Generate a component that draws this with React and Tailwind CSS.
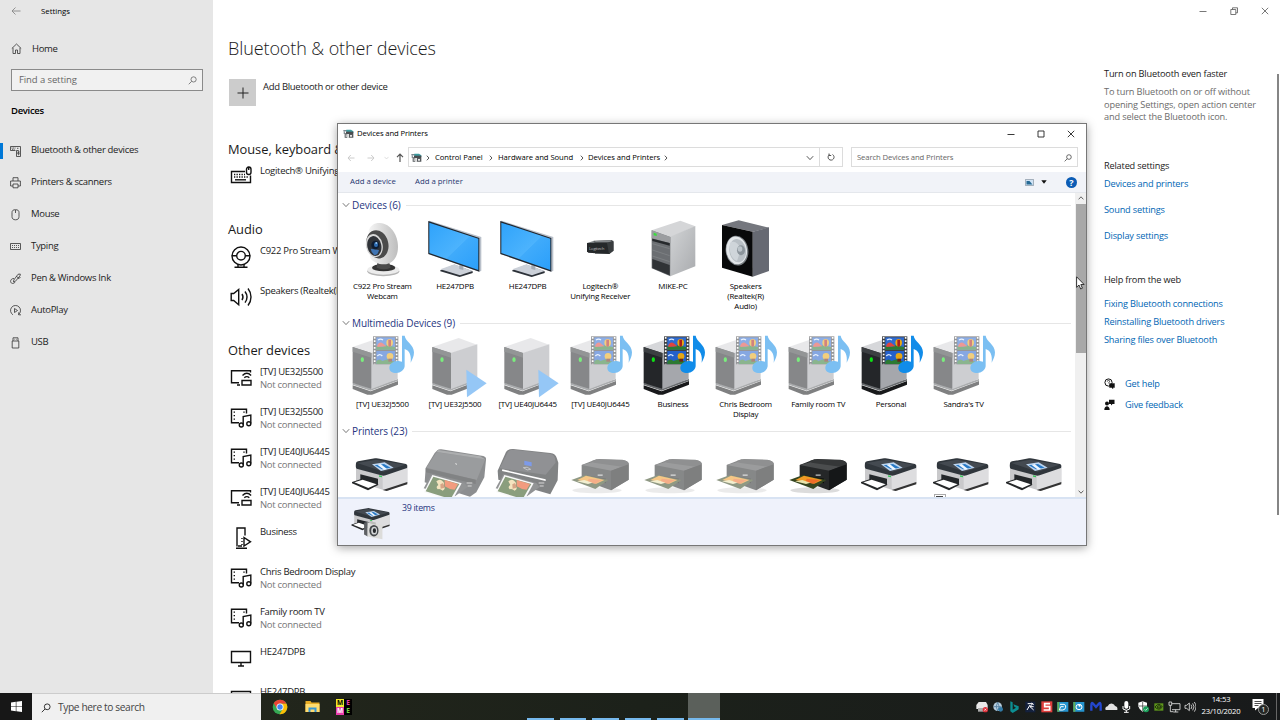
import React from "react";

const navItems = [
  { label: "Bluetooth & other devices", icon: "devices", active: true },
  { label: "Printers & scanners", icon: "printer" },
  { label: "Mouse", icon: "mouse" },
  { label: "Typing", icon: "keyboard" },
  { label: "Pen & Windows Ink", icon: "pen" },
  { label: "AutoPlay", icon: "autoplay" },
  { label: "USB", icon: "usb" },
];

const otherDevices = [
  { name: "[TV] UE32J5500", status: "Not connected", icon: "cast" },
  { name: "[TV] UE32J5500", status: "Not connected", icon: "media" },
  { name: "[TV] UE40JU6445", status: "Not connected", icon: "media" },
  { name: "[TV] UE40JU6445", status: "Not connected", icon: "cast" },
  { name: "Business", icon: "server" },
  { name: "Chris Bedroom Display", status: "Not connected", icon: "media" },
  { name: "Family room TV", status: "Not connected", icon: "media" },
  { name: "HE247DPB", icon: "display" },
  { name: "HE247DPB", icon: "display" },
];

/* ---------- small line icons ---------- */

function NavIcon({ name }) {
  const paths = {
    devices: (
      <>
        <path d="M5.500 5.500h-5v-4h10v10h-4v-6h2" />
        <path d="M1.500 3h4M7 3.300h2M2 4.300h3" strokeDasharray="1 0.600" />
        <path d="M7.300 6.800l2.200 2.200-1.100 1V5.800l1.100 1L7.300 9" strokeWidth="0.700" />
      </>
    ),
    printer: <path d="M3 4V.7h5V4M3 9H.6V4h9.800v5H8M3 7h5v3.800H3z" />,
    mouse: <path d="M5.500.7c2.500 0 3.500 1 3.500 2.800v4c0 2-1 3.300-3.500 3.300S2 9.500 2 7.500v-4C2 1.700 3 .7 5.500.7zM5.500 1v3" />,
    keyboard: (
      <>
        <path d="M.5 2.500h10v6h-10z" />
        <path d="M2 4.500h7M2 6.500h7" strokeDasharray="1 1" />
      </>
    ),
    pen: (
      <path d="M10.300 1 8 1.300 3.800 7l-.3 2 1.900-.7L10 2.800zM6.500 3.500l1.800 1.300M4 5.500c-2-.2-3.500 1.300-3.400 3 .2 2.500 3.700 2.500 4.400.5M8 5.500l2.500-1" />
    ),
    autoplay: (
      <>
        <path d="M3 9.800A5 5 0 1 1 8.500 9.500M8.700 7.300v2.500H11" />
        <path d="M4.500 3.500v4l3-2z" />
      </>
    ),
    usb: <path d="M3 4V.8h5V4M2.200 4h6.600v7H2.200zM4.500 2.300h.6M6 2.300h.6" />,
    home: <path d="M.8 5.500 5.500 1l4.700 4.500M2 4.800v5.700h2.500V7h2v3.500H9V4.800" />,
  };
  return (
    <svg width="11" height="12" viewBox="0 0 11 12" fill="none" stroke="#333" strokeWidth="0.8" className="shrink-0">
      {paths[name]}
    </svg>
  );
}

function DeviceIcon({ name }) {
  const paths = {
    keyboard: (
      <>
        <path d="M15 5.500H1.500v11h19v-7" />
        <path d="M4 8.500h11M4 11h14" strokeDasharray="1.300 1.200" />
        <path d="M5 13.800h11" />
        <rect x="16.500" y="1" width="4.500" height="7.500" rx="2.200" />
        <path d="M18.700 1v3" />
      </>
    ),
    webcam: (
      <>
        <circle cx="11" cy="10" r="9" />
        <circle cx="11" cy="9.700" r="4.300" />
        <path d="M2 9.700h4.700M15.300 9.700H20M8 18.500v2.500M14 18.500v2.500M4.500 21.300h13" />
      </>
    ),
    speaker: (
      <path d="M1.200 7.500v7h2.500l5 4.200V3.500l-5 4zM12 8c1.300 2 1.300 4.200 0 6.200M15 5.500c2.500 3.400 2.500 7.700 0 11.200M18 2.500c4 5 4 12 0 17" />
    ),
    cast: (
      <>
        <path d="M20.500 5.500V3.700h-19v12H9M7 18h3" />
        <path d="M12.500 8.500c2.600-2.600 6-2.600 8.600 0M14.300 10.800c1.600-1.600 3.500-1.600 5 0" />
        <path d="M12 13.500h9v4.500h-9z" />
      </>
    ),
    media: (
      <>
        <path d="M16.500 6.500V2.200h-15v13.500H9" />
        <path d="M4.300 4.500v9.500M14 4.500v2.500" strokeDasharray="1.300 2.200" />
        <path d="M13.200 17.800V9.500l7.600-1.500v8.500" />
        <circle cx="11.300" cy="18" r="2" />
        <circle cx="18.800" cy="16.700" r="2" />
      </>
    ),
    server: (
      <>
        <path d="M15 8.500V1H7v18.500M6 21.300h11M8 19h4M12 11v1M12 14v1M12 17v1" />
        <path d="M14 10.500v8.500l6.500-4.200z" />
      </>
    ),
    display: <path d="M1.500 4.500h19v11h-19zM11 15.500v3M8 19h6" />,
  };
  return (
    <svg width="22" height="22" viewBox="0 0 22 22" fill="none" stroke="#111" strokeWidth="1.400" className="shrink-0">
      {paths[name]}
    </svg>
  );
}

function SearchGlyph({ className, color }) {
  return (
    <svg viewBox="0 0 10 10" className={className} fill="none" stroke={color} strokeWidth="0.9">
      <circle cx="6.200" cy="3.800" r="2.900" />
      <path d="M4 6 .8 9.200" />
    </svg>
  );
}

/* ---------- illustrated device icons, three units per pixel ---------- */

function Art({ box, faded, children }) {
  return (
    <svg
      viewBox={box}
      width="72.660"
      height="62"
      className={faded ? "block shrink-0 overflow-visible opacity-55" : "block shrink-0 overflow-visible"}
    >
      {children}
    </svg>
  );
}

function Webcam() {
  return (
    <Art box="18 24 218 186">
      <defs>
        <linearGradient id="camShell" x1="0" x2="1">
          <stop offset="0" stopColor="#f5f5f5" />
          <stop offset="1" stopColor="#bdbdbd" />
        </linearGradient>
      </defs>
      <ellipse cx="130" cy="184" rx="48" ry="15" fill="#b5b5b5" />
      <ellipse cx="130" cy="179" rx="48" ry="15" fill="#ececec" />
      <ellipse cx="131" cy="173" rx="35" ry="11" fill="#333" />
      <path d="M114 145h30l8 28q-20 10-42 0z" fill="#4a4a4a" />
      <path d="M86 62c5-16 18-24 34-23 32 2 54 36 54 72 0 30-16 52-42 52-18 0-34-8-42-20z" fill="url(#camShell)" />
      <ellipse cx="112" cy="103" rx="33" ry="43" fill="#4b4b4b" transform="rotate(-14 112 103)" />
      <ellipse cx="103" cy="107" rx="25" ry="35" fill="#d9d9d9" transform="rotate(-12 103 107)" />
      <ellipse cx="103" cy="108" rx="21" ry="30" fill="#303338" transform="rotate(-12 103 108)" />
      <path d="M92 116l25 4q-4 18-15 14-8-6-10-18z" fill="#3f74b3" />
      <ellipse cx="106" cy="105" rx="12" ry="13" fill="#0e1d33" />
      <ellipse cx="108" cy="104" rx="6" ry="7" fill="#2e6db4" />
      <circle cx="109" cy="99" r="3" fill="#9cc8f2" />
    </Art>
  );
}

function Monitor() {
  return (
    <Art box="236 24 218 186">
      <defs>
        <linearGradient id="screen" x1="0" y1="0" x2="1" y2="1">
          <stop offset="0" stopColor="#2fa3fb" />
          <stop offset="0.550" stopColor="#4cb3fd" />
          <stop offset="0.560" stopColor="#40abfb" />
          <stop offset="1" stopColor="#2b9ffa" />
        </linearGradient>
      </defs>
      <path d="M300 181l42-17 55 20v5l-39 12-58-17z" fill="#2d3239" />
      <path d="M300 178l42-15 55 20-38 13z" fill="#ccd1d9" />
      <path d="M357 155h12v25l-12-3z" fill="#a4abb5" />
      <path d="M264 34l4-2 155 49v101l-6 3-153-53z" fill="#b9c0ca" />
      <path d="M264 33l153 51v101l-153-53z" fill="#20262e" />
      <path d="M267 38l147 48v94l-147-51z" fill="url(#screen)" />
    </Art>
  );
}

function Receiver() {
  return (
    <Art box="11 24 218 186">
      <path d="M100 92l55-2 5 5v27l-12 9h-44z" fill="#55585b" />
      <path d="M106 93l45-2 4 5h-52z" fill="#83878a" />
      <path d="M80 99l22-7v38l-21-4z" fill="#7b7f82" />
      <path d="M80 99l60-1 8 8v26l-64-4-4-4z" fill="#25282a" />
      <path d="M140 98l19-6v30l-13 10z" fill="#383c3e" />
      <text x="86" y="121" fontSize="13" fontFamily="Open Sans" fill="#bbb" textLength="46">Logitech</text>
    </Art>
  );
}

function Tower() {
  return (
    <Art box="229 24 218 186">
      <defs>
        <linearGradient id="towerSide" x1="0" x2="1" y1="0" y2="1">
          <stop offset="0" stopColor="#d2d4d6" />
          <stop offset="1" stopColor="#a9abae" />
        </linearGradient>
      </defs>
      <path d="M273 61l86-29 45 17-74 33z" fill="#d5d6d8" />
      <path d="M328 80l76-32v121l-75 30z" fill="url(#towerSide)" />
      <path d="M273 61l56 20v118l-56-24z" fill="#6b6e72" />
      <path d="M273 61l56 20v19l-56-15z" fill="#9b9da0" />
      <path d="M275 86l52 13v8l-52-14z" fill="#26292c" />
      <path d="M275 101l52 15M275 120l52 17M275 138l52 17" stroke="#8e9194" strokeWidth="1.500" />
      <path d="M275 147l52 18v31l-52-22z" fill="#303336" />
      <path d="M279 68l9 3v7l-9-2z" fill="#38e03b" />
    </Art>
  );
}

function Speaker() {
  return (
    <Art box="447 24 218 186">
      <path d="M486 45l50-14 91 22-48 12z" fill="#75777e" />
      <path d="M578 65l49-13v131l-49 17z" fill="#666972" />
      <path d="M486 45l92 20v135l-92-27z" fill="#08090a" />
      <ellipse cx="531" cy="122" rx="34" ry="45" fill="#777d82" transform="rotate(-8 531 122)" />
      <ellipse cx="530" cy="121" rx="31" ry="42" fill="#e2e6e9" transform="rotate(-8 530 121)" />
      <ellipse cx="533" cy="122" rx="25" ry="35" fill="#b9c0c6" transform="rotate(-8 533 122)" />
      <path d="M510 98q20-10 33 20l-12 35q-26-10-21-55z" fill="#cfd5da" />
      <ellipse cx="543" cy="121" rx="12" ry="15" fill="#8b949b" />
      <ellipse cx="540" cy="117" rx="7" ry="8" fill="#bdc5cb" />
    </Art>
  );
}

function ServerBody({ dx = 0 }) {
  return (
    <g transform={`translate(${dx} 0)`}>
      <path d="M38 181l54 18 82-31v11l-78 30H82l-44-17z" fill="#18191b" />
      <path d="M38 179l54 18 82-30v-5l-82 25-54-14z" fill="#66696c" />
      <path d="M38 66l79-27 55 20-78 26z" fill="#d6d7da" />
      <path d="M93 84l80-26v104l-80 31z" fill="#a5a7ac" />
      <path d="M38 66l56 18v107l-56-17z" fill="#242629" />
      <path d="M38 66l56 18v14l-56-18z" fill="#3c3f42" />
      <ellipse cx="67" cy="104" rx="5" ry="7" fill="#0ee014" />
    </g>
  );
}

function MediaServer({ faded }) {
  return (
    <Art box="18 33 218 186" faded={faded}>
      <ServerBody />
      <path d="M99 34h76v84h-76z" fill="#3f4144" />
      <path d="M104 36v82M170 36v82" stroke="#fff" strokeWidth="5" strokeDasharray="5 5" />
      <path d="M109 37h56v37h-56z" fill="#2f6bd0" />
      <path d="M109 78h56v39h-56z" fill="#2460cb" />
      <path d="M109 62l18 3 14-4 24 5v8h-56zM109 108q10-9 18 0l16-5 22 8v6h-56z" fill="#2c7a32" />
      <path d="M112 60q8-12 18-4l9 8-27 2z" fill="#e0443e" />
      <ellipse cx="149" cy="53" rx="10" ry="11" fill="#e8a713" />
      <path d="M145 44v18l4 4 4-4V44z" fill="#a91f1c" />
      <ellipse cx="150" cy="94" rx="10" ry="10" fill="#e8a713" />
      <path d="M145 101h11v9h-11z" fill="#6b2515" />
      <path d="M112 93q7-8 15 0M114 45q8-5 15 0" stroke="#dcecff" strokeWidth="4" fill="none" />
      <path d="M186 32h8c2 17 28 27 28 50 0 12-5 22-10 31 3-24-5-37-18-41v52c-2 12-12 20-25 20-13 0-21-6-21-15 0-13 14-23 28-21l10 2z" fill="#118ce9" />
    </Art>
  );
}

function PlayServer() {
  return (
    <Art box="236 33 218 186" faded>
      <ServerBody dx={238} />
      <path d="M378 134l61 41-59 42z" fill="#3f9af0" />
    </Art>
  );
}

function WhitePrinterShapes() {
  return (
    <>
      <path d="M48 84l82 22 72-25v48l-62 24-92-29z" fill="#c9c9cb" />
      <path d="M128 106l74-25v48l-62 23-12-6z" fill="#dddddf" />
      <path d="M131 149l71-23v7l-62 20-12-3z" fill="#333" />
      <path d="M48 70q0-4 6-6l51-9q7-1 14 1l79 16q5 2 4 8l-1 4-64 22q-6 2-14 0l-73-20q-4-2-2-16z" fill="#30363c" />
      <path d="M52 69l56-10 88 15-65 21z" fill="#444a51" />
      <path d="M96 73l38-6 27 16-38 10z" fill="#bdd5f0" />
      <path d="M104 76l28-4 20 11-26 5z" fill="#2779c6" />
      <path d="M112 74l10-2 19 15-9 2z" fill="#eef6ff" />
      <path d="M61 103l53 13v19l-53-10z" fill="#24272a" />
      <path d="M36 126l28-9 52 17-32 17-48-21z" fill="#252729" />
      <path d="M43 127l25-8 42 14-25 11z" fill="#fff" />
      <path d="M117 106l9 2v4l-9-2z" fill="#37c75a" />
    </>
  );
}

function WhitePrinter() {
  return (
    <Art box="18 12 218 186">
      <WhitePrinterShapes />
    </Art>
  );
}

function Photo() {
  return (
    <>
      <path d="M276 105l88 25-29 53-84-26z" fill="#f6f6f6" />
      <path d="M279 110l78 22-26 45-75-23z" fill="#2b4f14" />
      <path d="M313 120l40 12-10 17q-18-1-30-10z" fill="#e84c17" />
      <path d="M288 124q10-9 18-1 9 6 2 14 11 8-1 15-8-7-15-4-7-8 2-13z" fill="#eccf8c" />
      <path d="M300 133l8-4 5 14-12 3z" fill="#b65b24" />
    </>
  );
}

function AllInOne({ big }) {
  return (
    <Art box="236 12 218 186" faded>
      {big ? (
        <>
          <path d="M256 92l25-56q6-10 22-9l111 12q16 2 19 14l5 15-2 53-22 42-130-38-26-6z" fill="#1c1e21" />
          <path d="M262 85l25-50q6-7 17-6l107 12q14 1 17 14l2 13-30 36z" fill="#36393d" />
          <path d="M270 88l130 30v5l-131-30z" fill="#fff" />
          <path d="M336 62l22 5v12l-22-4z" fill="#1449d8" />
          <path d="M333 83q12-5 22 5-10 6-22-5" fill="none" stroke="#bbb" strokeWidth="2" />
        </>
      ) : (
        <>
          <path d="M256 84l27-45 9-9q3-3 11-2l126 20q10 3 8 12l-5 52-24 45-19 13-136-43z" fill="#303336" />
          <path d="M258 83l31-46 146 20-26 63z" fill="#494c4f" />
          <path d="M289 36l5-6 126 19 14 9z" fill="#696c6f" />
          <path d="M256 85l150 34v13l-149-35z" fill="#1c1e20" />
          <path d="M345 71l5 2" stroke="#ddd" strokeWidth="3" />
        </>
      )}
      <path d="M274 101l98 28 10 12-38 28-94-24z" fill="#3a3d40" />
      <Photo />
      <path d="M379 129h17M382 138h12" stroke="#bbb" strokeWidth="3" />
    </Art>
  );
}

function CompactPrinter({ faded }) {
  return (
    <Art box="671 12 218 186" faded={faded}>
      <ellipse cx="770" cy="151" rx="74" ry="9" fill="#dcdcdc" />
      <path d="M724 75l44-17 81 3q16 2 16 11v47l-53 32-88-32z" fill="#252728" />
      <path d="M724 75l45-12 95 10-51 19z" fill="#4b4d4e" />
      <path d="M756 62l20-5 70 2q14 2 20 12l-9 11-92-13q-10-1-9-7z" fill="#353738" />
      <path d="M812 92l53-19v46l-53 32z" fill="#151718" />
      <path d="M731 105l66 11v14l-69-16z" fill="#080909" />
      <path d="M693 120l41-15 70 15-39 27z" fill="#354620" />
      <path d="M711 120l26-13 55 13-24 11z" fill="#f09a24" />
      <path d="M745 116l40 4-20 11-23-5z" fill="#ee6d28" />
      <path d="M710 124l22-4 24 8-13 4z" fill="#e9e3ab" />
      <path d="M772 103h15v5h-15z" fill="#9b9d9e" />
    </Art>
  );
}

const devices = [
  { art: <Webcam />, label: ["C922 Pro Stream", "Webcam"] },
  { art: <Monitor />, label: ["HE247DPB"] },
  { art: <Monitor />, label: ["HE247DPB"] },
  { art: <Receiver />, label: ["Logitech®", "Unifying Receiver"] },
  { art: <Tower />, label: ["MIKE-PC"] },
  { art: <Speaker />, label: ["Speakers", "(Realtek(R)", "Audio)"] },
];

const mediaDevices = [
  { art: <MediaServer faded />, label: ["[TV] UE32J5500"] },
  { art: <PlayServer />, label: ["[TV] UE32J5500"] },
  { art: <PlayServer />, label: ["[TV] UE40JU6445"] },
  { art: <MediaServer faded />, label: ["[TV] UE40JU6445"] },
  { art: <MediaServer />, label: ["Business"] },
  { art: <MediaServer faded />, label: ["Chris Bedroom", "Display"] },
  { art: <MediaServer faded />, label: ["Family room TV"] },
  { art: <MediaServer />, label: ["Personal"] },
  { art: <MediaServer faded />, label: ["Sandra's TV"] },
];

const printers = [
  { art: <WhitePrinter />, label: [] },
  { art: <AllInOne />, label: [] },
  { art: <AllInOne big />, label: [] },
  { art: <CompactPrinter faded />, label: [] },
  { art: <CompactPrinter faded />, label: [] },
  { art: <CompactPrinter faded />, label: [] },
  { art: <CompactPrinter />, label: [] },
  { art: <WhitePrinter />, label: [] },
  { art: <WhitePrinter />, label: [], marker: true },
  { art: <WhitePrinter />, label: [] },
];

/* ---------- settings ---------- */

function Sidebar() {
  return (
    <aside className="w-[213px] h-full bg-[#e6e6e6] shrink-0 text-[9.500px] tracking-[-0.310px] text-[#222]">
      <div className="flex items-center h-[22px] pl-[11px] gap-[20px]">
        <svg width="10" height="10" viewBox="0 0 10 10" fill="none" stroke="#888" strokeWidth="0.9">
          <path d="M9.500 5H1M4.500 1.500 1 5l3.500 3.500" />
        </svg>
        <span className="pt-px text-[7.800px] tracking-normal text-black">Settings</span>
      </div>
      <div className="flex items-center h-[20px] mt-[17px] pl-[11px] gap-[10px]">
        <NavIcon name="home" />
        <span>Home</span>
      </div>
      <div className="mt-[10px] ml-[11px] w-[192px] h-[22px] border-[1.500px] border-[#8a8a8a] bg-[#f1f1f1] flex items-center justify-between pl-[7px] pr-[5px] text-[#666]">
        <span className="tracking-[-0.100px]">Find a setting</span>
        <SearchGlyph className="w-[9px] h-[9px]" color="#666" />
      </div>
      <div className="mt-[10px] h-[20px] flex items-center pl-[11px] font-semibold text-black">Devices</div>
      <nav className="mt-[13px] pt-[0.500px]">
        {navItems.map((item) => (
          <div key={item.label} className="h-[32px] flex items-center">
            <div className={item.active ? "w-[3px] h-[16px] bg-[#0078d7]" : "w-[3px]"} />
            <div className="ml-[7px] mr-[10px]">
              <NavIcon name={item.icon} />
            </div>
            <span>{item.label}</span>
          </div>
        ))}
      </nav>
    </aside>
  );
}

function DeviceRow({ name, status, icon }) {
  return (
    <div className="h-[40px] flex">
      <div className="w-[32px] pl-[2px] pt-[2px]">
        <DeviceIcon name={icon} />
      </div>
      <div className="text-[9.500px] leading-[13px] tracking-[-0.280px] whitespace-nowrap">
        <div>{name}</div>
        {status && <div className="text-[#767676]">{status}</div>}
      </div>
    </div>
  );
}

function SectionTitle({ children }) {
  return <h2 className="h-[22px] flex items-center text-[12.900px] tracking-[-0.050px] whitespace-nowrap">{children}</h2>;
}

function SettingsMain() {
  return (
    <main className="w-[875px] h-full pl-[15px] overflow-hidden text-[#1a1a1a]">
      <h1 className="mt-[33px] h-[30px] flex items-center text-[18px] font-light tracking-[-0.100px]">Bluetooth &amp; other devices</h1>
      <div className="mt-[16px] ml-px h-[27px] flex gap-[7px]">
        <div className="w-[27px] h-[27px] bg-[#ccc] flex items-center justify-center">
          <svg width="12" height="12" viewBox="0 0 12 12" stroke="#222" strokeWidth="1">
            <path d="M6 .5v11M.5 6h11" />
          </svg>
        </div>
        <span className="text-[9.500px] leading-[15px] tracking-[-0.300px]">Add Bluetooth or other device</span>
      </div>
      <div className="mt-[33px]">
        <SectionTitle>Mouse, keyboard &amp; pen</SectionTitle>
        <div className="mt-[3px]">
          <DeviceRow name="Logitech® Unifying Receiver" icon="keyboard" />
        </div>
      </div>
      <div className="mt-[15px]">
        <SectionTitle>Audio</SectionTitle>
        <div className="mt-[3px]">
          <DeviceRow name="C922 Pro Stream Webcam" icon="webcam" />
          <DeviceRow name="Speakers (Realtek(R) Audio)" icon="speaker" />
        </div>
      </div>
      <div className="mt-[16px]">
        <SectionTitle>Other devices</SectionTitle>
        <div className="mt-[3px]">
          {otherDevices.map((d, i) => (
            <DeviceRow key={i} {...d} />
          ))}
        </div>
      </div>
    </main>
  );
}

function Link({ children, className }) {
  return <a className={`block h-[18px] leading-[18px] text-[#0066b4] ${className || ""}`}>{children}</a>;
}

function SettingsAside() {
  return (
    <aside className="w-[192px] h-full shrink-0 text-[9.200px] tracking-[-0.180px] text-[#1a1a1a] whitespace-nowrap">
      <div className="h-[22px] flex items-center justify-end gap-[23px] pr-[11px]">
        <svg width="8" height="8" viewBox="0 0 8 8" stroke="#555" fill="none" strokeWidth="0.800">
          <path d="M.5 4.500h7" />
        </svg>
        <svg width="8" height="8" viewBox="0 0 8 8" stroke="#555" fill="none" strokeWidth="0.800">
          <path d="M.8 2.500h5v5h-5zM2.500 2.500V.8h5v5H5.800" />
        </svg>
        <svg width="8" height="8" viewBox="0 0 8 8" stroke="#555" fill="none" strokeWidth="0.800">
          <path d="M.8.8l6.400 6.400M7.200.8.8 7.200" />
        </svg>
      </div>
      <div className="flex justify-between pt-[43px]">
        <div className="pl-[16px]">
          <div className="h-[18px] leading-[18px]">Turn on Bluetooth even faster</div>
          <p className="mt-[3px] leading-[12.500px] tracking-[-0.130px] text-[#6b6b6b]">
            To turn Bluetooth on or off without
            <br />
            opening Settings, open action center
            <br />
            and select the Bluetooth icon.
          </p>
          <div className="mt-[33px] h-[18px] leading-[18px]">Related settings</div>
          <Link>Devices and printers</Link>
          <Link className="mt-[8px]">Sound settings</Link>
          <Link className="mt-[8px]">Display settings</Link>
          <div className="mt-[26px] h-[18px] leading-[18px]">Help from the web</div>
          <Link className="mt-[6px]">Fixing Bluetooth connections</Link>
          <Link>Reinstalling Bluetooth drivers</Link>
          <Link>Sharing files over Bluetooth</Link>
          <div className="mt-[26px] flex items-center gap-[10px]">
            <svg width="11" height="11" viewBox="0 0 11 11" fill="none" stroke="#111">
              <circle cx="4.500" cy="4.500" r="3.600" />
              <path d="M3.300 3.500c0-1.700 2.500-1.500 2.300 0-.1.900-1.100.9-1.100 1.800" strokeWidth="0.800" />
              <path d="M5.500 5.500h5v4H9v1.300L7.500 9.500h-2z" fill="#111" strokeWidth="0.400" />
            </svg>
            <Link>Get help</Link>
          </div>
          <div className="mt-[3px] flex items-center gap-[10px]">
            <svg width="11" height="11" viewBox="0 0 11 11" fill="#111">
              <circle cx="3" cy="4.500" r="2" />
              <path d="M.3 11c0-5 5.400-5 5.400 0zM5 .8h5.500v4.200H8.500L7 6.500V5H5z" />
            </svg>
            <Link>Give feedback</Link>
          </div>
        </div>
        <div className="mt-[9px] mr-px w-[2px] h-[441px] bg-[#858585]" />
      </div>
    </aside>
  );
}

/* ---------- explorer window ---------- */

function PrintersGlyph() {
  return (
    <svg width="11" height="10" viewBox="0 0 33 30" className="shrink-0">
      <path d="M1 3h20v4H1z" fill="#7d8890" />
      <path d="M2 7h4v8H2z" fill="#8d979d" />
      <path d="M10 2h14l7 5v5H10z" fill="#3c9ca0" />
      <path d="M9 8h22v7H9z" fill="#494d50" />
      <path d="M5 13h8v13H5zM17 15h14v11H17z" fill="#55595c" />
      <path d="M8 16h3v8H8zM14 15h3v10h-3z" fill="#eee" />
      <path d="M21 18h6v5h-6z" fill="#e6e6e6" />
    </svg>
  );
}

function Chevron({ className }) {
  return (
    <svg width="4" height="6" viewBox="0 0 4 6" fill="none" stroke="#444" strokeWidth="0.9" className={className}>
      <path d="M.8.7 3 3 .8 5.300" />
    </svg>
  );
}

function DownChevron({ color = "#555", w = 8 }) {
  return (
    <svg width={w} height="6" viewBox="0 0 8 6" fill="none" stroke={color} className="shrink-0">
      <path d="M.8 1.200 4 4.600l3.200-3.400" />
    </svg>
  );
}

function GroupHeader({ children }) {
  return (
    <div className="h-[20px] flex items-center pl-[4px]">
      <DownChevron color="#777" />
      <span className="ml-[2px] text-[10px] tracking-[-0.100px] text-[#27367f] whitespace-nowrap">{children}</span>
      <div className="ml-[5px] h-px flex-1 bg-[#e6e6e6]" />
    </div>
  );
}

function TileRow({ items }) {
  return (
    <div className="flex pl-[8px]">
      {items.map((item, i) => (
        <div key={i} className="w-[72.660px] shrink-0 flex flex-col items-center">
          {item.art}
          {item.marker && (
            <div className="-mt-[12px] mr-[48px] w-[12px] h-[6px] border border-[#aaa] bg-white flex justify-center pt-px">
              <div className="w-[7px] h-[3px] bg-[#444]" />
            </div>
          )}
          <div className="text-center text-[7.900px] leading-[10px] tracking-[-0.200px] pt-[0.500px] text-black whitespace-nowrap">
            {item.label.map((line) => (
              <div key={line}>{line}</div>
            ))}
          </div>
        </div>
      ))}
    </div>
  );
}

function ExplorerWindow() {
  return (
    <div className="absolute left-[337px] top-[123px] w-[750px] h-[423px] bg-white border border-[#777] shadow-[0_2px_9px_rgba(0,0,0,0.35)] flex flex-col text-[8px] text-[#222]">
      <div className="h-[20px] flex items-center pl-[5px] pr-[11px]">
        <PrintersGlyph />
        <span className="ml-[3px] text-[7.700px] tracking-[-0.130px] text-black">Devices and Printers</span>
        <div className="ml-auto flex items-center gap-[22px]">
          <svg width="8" height="8" viewBox="0 0 8 8" stroke="#222" fill="none" strokeWidth="0.900">
            <path d="M.5 4.500h7" />
          </svg>
          <svg width="8" height="8" viewBox="0 0 8 8" stroke="#222" fill="none" strokeWidth="0.900">
            <path d="M1 1h6v6H1z" />
          </svg>
          <svg width="8" height="8" viewBox="0 0 8 8" stroke="#222" fill="none" strokeWidth="0.900">
            <path d="M.8.8l6.400 6.400M7.200.8.8 7.200" />
          </svg>
        </div>
      </div>

      <div className="mt-[3px] h-[20px] flex items-center pr-[8px]">
        <div className="w-[70px] h-full flex items-center pl-[9px] pt-px">
          <svg width="8" height="8" viewBox="0 0 8 8" fill="none" stroke="#ccc">
            <path d="M7.500 4H1M3.800 1 1 4l2.800 3" />
          </svg>
          <svg width="8" height="8" viewBox="0 0 8 8" fill="none" stroke="#ccc" className="ml-[12px]">
            <path d="M.5 4H7M4.200 1 7 4 4.200 7" />
          </svg>
          <div className="ml-[9px]">
            <DownChevron color="#ccc" w={5} />
          </div>
          <svg width="8" height="9" viewBox="0 0 8 9" fill="none" stroke="#555" strokeWidth="1.200" className="ml-[7px]">
            <path d="M4 9V1.200M1 4.200l3-3 3 3" />
          </svg>
        </div>
        <div className="w-[412px] h-full border border-[#dcdcdc] flex items-center pl-[2px] pt-px text-[7.700px] tracking-[-0.060px] text-black whitespace-nowrap">
          <PrintersGlyph />
          <Chevron className="ml-[4px]" />
          <span className="ml-[5px] w-[48px]">Control Panel</span>
          <Chevron className="ml-[6px]" />
          <span className="ml-[5px] w-[76px]">Hardware and Sound</span>
          <Chevron className="ml-[6px]" />
          <span className="ml-[4px] w-[71px]">Devices and Printers</span>
          <Chevron className="ml-[5px]" />
          <div className="ml-auto mr-[5px]">
            <DownChevron />
          </div>
        </div>
        <div className="w-[23px] h-full border border-l-0 border-[#dcdcdc] flex items-center justify-center">
          <svg width="8" height="8" viewBox="0 0 8 8" fill="none" stroke="#555">
            <path d="M5.500 1.500a3 3 0 1 1-3.200.2M2 .5v2h2.200" />
          </svg>
        </div>
        <div className="ml-[8px] flex-1 h-full border border-[#dcdcdc] flex items-center justify-between pl-[5px] pr-[5px] pt-px text-[7.700px] tracking-[-0.120px] text-[#666]">
          <span>Search Devices and Printers</span>
          <SearchGlyph className="w-[8px] h-[8px]" color="#333" />
        </div>
      </div>

      <div className="mt-[5px] h-[21px] bg-[#f1f3f8] border-b border-[#e4e7ec] flex items-center pl-[12px] pr-[9px] text-[7.800px] text-[#263670]">
        <span className="w-[65px]">Add a device</span>
        <span>Add a printer</span>
        <svg width="9" height="7" viewBox="0 0 9 7" className="ml-auto">
          <path d="M.4.400h8.200v6.200H.4z" fill="#cfe2f4" stroke="#8d99a6" strokeWidth="0.800" />
          <path d="M1.500 2h3l3 3.500h-6z" fill="#276a94" />
        </svg>
        <svg width="6" height="4" viewBox="0 0 6 4" className="ml-[7px]">
          <path d="M.3.300h5.400L3 3.700z" fill="#111" />
        </svg>
        <div className="ml-[19px] w-[11px] h-[11px] rounded-full bg-[#0b5cb5] text-white text-[9px] leading-[11px] font-bold text-center">?</div>
      </div>

      <div className="flex h-[304px]">
        <div className="w-[733px] h-full overflow-hidden pt-[2px]">
          <div className="h-[118px]">
            <GroupHeader>Devices (6)</GroupHeader>
            <div className="mt-[3px]">
              <TileRow items={devices} />
            </div>
          </div>
          <div className="h-[108px]">
            <GroupHeader>Multimedia Devices (9)</GroupHeader>
            <div className="mt-[3px]">
              <TileRow items={mediaDevices} />
            </div>
          </div>
          <GroupHeader>Printers (23)</GroupHeader>
          <div className="mt-[3px]">
            <TileRow items={printers} />
          </div>
        </div>
        <div className="ml-[4px] w-[11px] h-full bg-[#f0f0f0] flex flex-col items-center">
          <div className="h-[11px] flex items-center rotate-180">
            <DownChevron color="#333" w={6} />
          </div>
          <div className="w-[10px] h-[149px] bg-[#a8a8a8]" />
          <div className="mt-auto h-[11px] flex items-center">
            <DownChevron color="#333" w={6} />
          </div>
        </div>
      </div>

      <div className="flex-1 border-t-2 border-[#d8e3f3] bg-[#eff2fb] flex pl-[13px] text-[#27367f]">
        <svg width="39" height="34" viewBox="34 50 170 148" className="mt-[8px] shrink-0">
          <WhitePrinterShapes />
          <path d="M91 119l16-5v64l-16-8z" fill="#5d6063" />
          <path d="M106 116l65 12v62l-65-11z" fill="#dcdcda" />
          <path d="M118 112l24 5v10l-24-5z" fill="#bcbcba" />
          <ellipse cx="134" cy="153" rx="20" ry="25" fill="#44484b" />
          <ellipse cx="135" cy="153" rx="13" ry="17" fill="#d3d6d7" />
          <ellipse cx="136" cy="153" rx="7" ry="10" fill="#25282b" />
        </svg>
        <span className="ml-[12px] mt-[3px] text-[8.800px] leading-[12px] tracking-[-0.300px]">39 items</span>
      </div>
    </div>
  );
}

/* ---------- taskbar ---------- */

function Tray() {
  return (
    <div className="ml-auto flex items-center h-full">
      <svg width="222" height="14" viewBox="0 0 666 42">
        {/* printer alert, globe, bing */}
        <path d="M7 15l7-9h22l5 9v12H7z" fill="#e8e8e8" />
        <path d="M12 24h19v11H12z" fill="#aaa" />
        <circle cx="34" cy="29" r="8" fill="#dc3039" />
        <path d="M31 26l6 6M37 26l-6 6" stroke="#fff" strokeWidth="2" />
        <circle cx="71" cy="20" r="13" fill="#b7cedf" />
        <path d="M59 20h24M71 7q-9 13 0 26M71 7q9 13 0 26" stroke="#3c6d91" strokeWidth="2" fill="none" />
        <circle cx="80" cy="28" r="7" fill="#317ba7" />
        <path d="M109 4l7 3v22l10-6-5-3-3-7 16 6v9l-18 11-7-5z" fill="#0c8e92" />
        {/* runner badge */}
        <path d="M154 5h30v32h-30z" fill="#14213d" />
        <path d="M161 11h15l-8 9 11 10M168 15l-9 15M173 9l6 5M168 20h11" stroke="#fff" strokeWidth="3" fill="none" />
        {/* snagit and two sync clients */}
        <path d="M202 4h33v33h-33z" fill="#df3f3d" />
        <path d="M228 11h-16v9h15v10h-18" stroke="#fff" strokeWidth="5" fill="none" />
        <path d="M250 6h33v29h-33zM298 6h33v29h-33z" fill="#2594cf" />
        <path d="M250 6h6v29h-6zM298 6h6v29h-6z" fill="#5fac56" />
        <path d="M258 13h12q7 2 5 9-2 8-9 8h-10l4-10h9" stroke="#fff" strokeWidth="3" fill="none" />
        <ellipse cx="315" cy="21" rx="9" ry="8" stroke="#fff" strokeWidth="3" fill="none" />
        <path d="M312 17l9-6-3 10" fill="#fff" />
        {/* malwarebytes */}
        <path d="M352 32V17q0-14 7-4l7 8 7-8q7-10 7 4v15" stroke="#2447ce" strokeWidth="7" fill="none" />
        {/* cloud, mic, shield */}
        <path d="M395 30q-4-8 6-11 4-10 14-8 6 1 8 7 9 2 7 12z" fill="#e2e2e2" />
        <rect x="451" y="3" width="12" height="23" rx="6" fill="#fff" />
        <path d="M447 18v9q10 8 20 0v-9M457 31v6M450 37h14" stroke="#fff" strokeWidth="3" fill="none" />
        <path d="M493 8l13-4 13 4v11q-2 10-13 16-11-6-13-16z" fill="#fff" />
        <path d="M506 5v28M494 18h25" stroke="#252a25" strokeWidth="2" />
        <circle cx="516" cy="28" r="9" fill="#1ca05b" />
        <path d="M512 28l3 3 6-6" stroke="#fff" strokeWidth="2" fill="none" />
        {/* nvidia */}
        <path d="M541 10h27v22h-27z" fill="#5d951b" />
        <path d="M543 21q12-16 22 0-10 13-22 0zM549 21q6-9 12 0-6 7-12 0" fill="none" stroke="#20340b" strokeWidth="3" />
        {/* network, volume */}
        <path d="M594 11h24v18h-24M585 6v10h8V6zM589 16v19h9M605 29v7M598 36h15" stroke="#e5e5e5" strokeWidth="2.500" fill="none" />
        <path d="M633 16v9h5l8 7V9l-8 7zM651 14q5 6 0 13M656 10q8 10 0 21M661 6q10 14 0 29" stroke="#e5e5e5" strokeWidth="2.500" fill="none" />
      </svg>
      <div className="ml-[4px] mb-[3px] w-[42px] text-center text-[7.700px] leading-[12px] tracking-[-0.180px] text-white whitespace-nowrap">
        <div>14:53</div>
        <div>23/10/2020</div>
      </div>
      <div className="relative ml-[10px] w-[17px] h-[17px]">
        <svg width="13" height="13" viewBox="0 0 13 13">
          <path d="M.5 1h11v9H6l-3 2.500V10H.5z" fill="#fff" />
          <path d="M2.500 3.500h7M2.500 5.500h7M2.500 7.500h4" stroke="#222" strokeWidth="0.800" />
        </svg>
        <span className="absolute left-[6px] top-[6px] w-[11px] h-[11px] rounded-full border border-[#999] bg-[#252825] text-white text-[7.500px] leading-[9px] text-center">1</span>
      </div>
      <div className="ml-[7px] mr-[3px] w-px h-full bg-[#666]" />
    </div>
  );
}

function Taskbar() {
  return (
    <footer className="h-[27px] flex items-center bg-gradient-to-r from-[#26291c] via-[#1c211a] to-[#181a1b] overflow-hidden">
      <div className="w-[32px] h-full bg-[#171717] flex items-center justify-center">
        <svg width="11" height="11" viewBox="0 0 11 11" fill="#fff">
          <path d="M0 1.500 4.800.8v4.400H0zM5.400.7 11 0v5.200H5.400zM0 5.800h4.800v4.400L0 9.500zM5.400 5.800H11V11l-5.600-.7z" />
        </svg>
      </div>
      <div className="w-[229px] h-full bg-[#f0f0f0] border-t border-[#ccc] flex items-center pl-[9px] pt-px text-[10.200px] tracking-[-0.380px] text-[#444]">
        <SearchGlyph className="w-[10px] h-[10px] mr-[7px]" color="#222" />
        Type here to search
      </div>
      <div className="w-[37px] flex justify-center">
        <svg width="16" height="16" viewBox="0 0 16 16">
          <circle cx="8" cy="8" r="7.300" fill="#35a853" />
          <path d="M1.700 4.300A7.300 7.300 0 0 1 14.500 4.700H8L5 9.500z" fill="#ea4335" />
          <path d="M8 4.700h6.500A7.300 7.300 0 0 1 7.500 15.300l3.500-5.500z" fill="#fbbc05" />
          <circle cx="8" cy="8" r="3.500" fill="#fff" />
          <circle cx="8" cy="8" r="2.700" fill="#4285f4" />
        </svg>
      </div>
      <div className="w-[29px] flex justify-center">
        <svg width="15" height="13" viewBox="0 0 15 13">
          <path d="M.5 1h5l1 1.500h8V12H.5z" fill="#e9ad26" />
          <path d="M.5 4h14v8H.5z" fill="#ffdc70" />
          <path d="M3.500 7.500h8V12H9.500V9.500h-4V12h-2z" fill="#3b97d3" />
        </svg>
      </div>
      <div className="w-[34px] flex justify-center">
        <div className="w-[16px] h-[16px] grid grid-cols-2 bg-black text-[6.500px] leading-[8px] font-bold text-center">
          <span className="h-[8px] bg-[#efe72b] text-black">M</span>
          <span className="h-[8px] text-[#ea3caa]">E</span>
          <span className="h-[8px] bg-[#ea3caa] text-white">M</span>
          <span className="h-[8px] text-[#75d640]">E</span>
        </div>
      </div>
      <div className="ml-[166px] h-full flex items-end gap-[6px]">
        {[1, 2, 3, 4, 5].map((n) => (
          <div key={n} className="w-[26.500px] h-[2px] bg-[#76b9ed]" />
        ))}
      </div>
      <div className="ml-[4px] w-[32px] h-full bg-[#5b605b] border-b-2 border-[#76b9ed]" />
      <Tray />
    </footer>
  );
}

export default function App() {
  return (
    <div className="relative w-[1280px] h-[720px] overflow-hidden bg-white font-['Open_Sans','Noto_Sans',sans-serif]">
      <div className="flex h-[693px] overflow-hidden">
        <Sidebar />
        <SettingsMain />
        <SettingsAside />
      </div>
      <Taskbar />
      <ExplorerWindow />
      {/* mouse pointer over the scrollbar */}
      <svg width="9" height="14" viewBox="0 0 9 14" className="absolute left-[1076px] top-[276px]">
        <path d="M.6.800v10.500L3 9l1.700 4 1.700-.8L4.800 8.500h3.300z" fill="#fff" stroke="#111" strokeWidth="0.800" />
      </svg>
    </div>
  );
}
